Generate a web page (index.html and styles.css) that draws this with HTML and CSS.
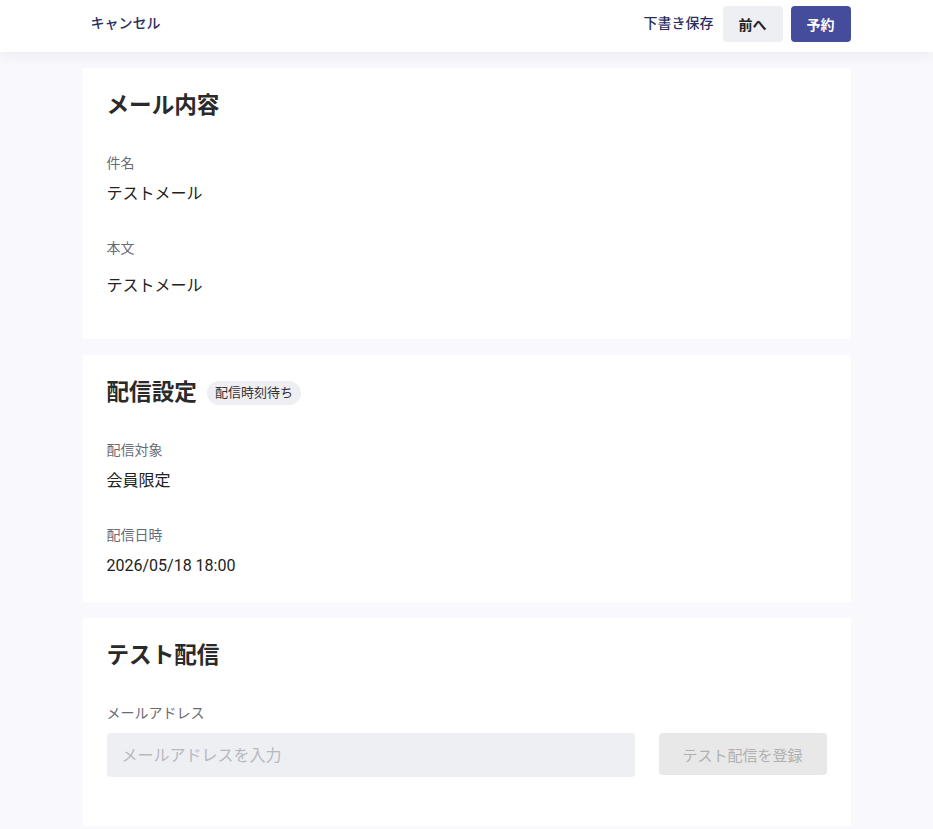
FILE: index.html
```html
<!DOCTYPE html>
<html lang="ja">
<head>
<meta charset="utf-8">
<title>メール内容</title>
<link rel="stylesheet" href="styles.css">
</head>
<body>
<header class="topbar">
  <div class="topbar-inner">
    <button class="text-btn">キャンセル</button>
    <div class="actions">
      <button class="text-btn">下書き保存</button>
      <button class="btn btn-secondary">前へ</button>
      <button class="btn btn-primary">予約</button>
    </div>
  </div>
</header>
<main class="content">
  <section class="card">
    <h2 class="card-title">メール内容</h2>
    <div class="field">
      <div class="field-label">件名</div>
      <div class="field-value">テストメール</div>
    </div>
    <div class="field">
      <div class="field-label">本文</div>
      <div class="field-value field-body">テストメール</div>
    </div>
  </section>
  <section class="card">
    <h2 class="card-title">配信設定<span class="badge">配信時刻待ち</span></h2>
    <div class="field">
      <div class="field-label">配信対象</div>
      <div class="field-value">会員限定</div>
    </div>
    <div class="field">
      <div class="field-label">配信日時</div>
      <div class="field-value">2026/05/18 18:00</div>
    </div>
  </section>
  <section class="card">
    <h2 class="card-title">テスト配信</h2>
    <div class="field">
      <div class="field-label">メールアドレス</div>
      <div class="test-row">
        <input class="text-input" type="text" placeholder="メールアドレスを入力">
        <button class="btn btn-disabled" disabled>テスト配信を登録</button>
      </div>
    </div>
  </section>
</main>
</body>
</html>
```

FILE: styles.css
```css
* { box-sizing: border-box; }

html, body {
  margin: 0;
  padding: 0;
}

body {
  background: #f9f9fd;
  font-family: Roboto, "Noto Sans CJK JP", sans-serif;
  color: #222;
}

button, input {
  font-family: inherit;
}

.topbar {
  position: sticky;
  top: 0;
  z-index: 10;
  height: 52px;
  background: #fff;
  box-shadow: 0 2px 14px rgba(40, 40, 80, 0.09);
}

.topbar-inner {
  width: 768px;
  margin: 0 auto;
  padding-top: 6px;
  display: flex;
  align-items: flex-start;
  justify-content: space-between;
}

.actions {
  display: flex;
  align-items: flex-start;
}

.text-btn {
  background: none;
  border: none;
  height: 32px;
  padding: 0 8px;
  font-size: 14px;
  font-weight: 500;
  color: #2a2e5e;
  cursor: pointer;
}

.btn {
  border: none;
  border-radius: 4px;
  height: 36px;
  padding: 0 16px;
  font-size: 14px;
  font-weight: 700;
  cursor: pointer;
}

.btn-secondary {
  background: #eeeff3;
  color: #222;
  margin-left: 1px;
}

.btn-primary {
  background: #454c9b;
  color: #fff;
  margin-left: 8px;
}

.content {
  width: 768px;
  margin: 0 auto;
  padding: 16px 0 16px;
  display: flex;
  flex-direction: column;
  gap: 16px;
}

.card {
  background: #fff;
  padding: 24px;
}

.card-title {
  margin: 0 0 32px;
  font-size: 22.6px;
  line-height: 28px;
  font-weight: 700;
  color: #2a2a2a;
  display: flex;
  align-items: center;
}

.badge {
  display: inline-flex;
  align-items: center;
  height: 24px;
  padding: 0 8px;
  margin-left: 10px;
  border-radius: 12px;
  background: #eeeef3;
  color: #333;
  font-size: 13px;
  font-weight: 400;
}

.field + .field {
  margin-top: 31px;
}

.field-label {
  font-size: 14px;
  line-height: 22px;
  color: #6b6b75;
  margin-bottom: 8px;
}

.field-value {
  font-size: 16px;
  line-height: 24px;
  color: #222;
}

.field-body {
  margin-top: 15px;
  margin-bottom: 17px;
}

.test-row {
  display: flex;
  align-items: flex-start;
  gap: 24px;
  margin-top: 9px;
  margin-bottom: 25px;
}

.text-input {
  flex: 1;
  height: 44px;
  border: none;
  border-radius: 4px;
  background: #eeeff2;
  padding: 0 15px;
  font-size: 16px;
  color: #222;
  outline: none;
}

.text-input::placeholder {
  color: #b8b8c0;
}

.btn-disabled {
  width: 168px;
  height: 42px;
  padding: 0;
  background: #e8e8e8;
  color: #b0b0b0;
  font-size: 15px;
  font-weight: 400;
  cursor: default;
}
```
